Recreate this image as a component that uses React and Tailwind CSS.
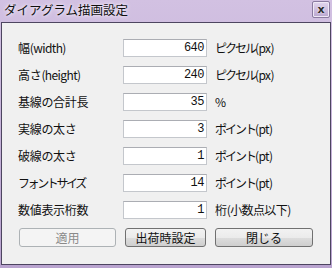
const rows = [
  { label: ['幅', '(width)'], value: '640', unit: ['ピクセル', '(px)'] },
  { label: ['高さ', '(height)'], value: '240', unit: ['ピクセル', '(px)'] },
  { label: ['基線の合計長', ''], value: '35', unit: ['', '%'] },
  { label: ['実線の太さ', ''], value: '3', unit: ['ポイント', '(pt)'] },
  { label: ['破線の太さ', ''], value: '1', unit: ['ポイント', '(pt)'] },
  { label: ['フォントサイズ', ''], value: '14', unit: ['ポイント', '(pt)'] },
  { label: ['数値表示桁数', ''], value: '1', unit: ['桁', '(小数点以下)'] },
];

const font = "font-['Noto_Sans_CJK_JP','Noto_Sans',sans-serif]";

const isKana = (s) => /[\u30a0-\u30ff]/.test(s);

function Text({ parts }) {
  const [a, b] = parts;
  return (
    <>
      {a && (
        <span className={isKana(a) ? (a === 'フォントサイズ' ? 'tracking-[-2.4px]' : 'tracking-[-2px]') : 'tracking-[-0.3px]'}>
          {a}
        </span>
      )}
      {b && <span className="tracking-[-0.6px]">{b}</span>}
    </>
  );
}

export default function App() {
  return (
    <div
      className={`w-[332px] h-[268px] flex flex-col overflow-hidden bg-[linear-gradient(to_bottom,#d2c1e2,#b9a3cf)] ${font}`}
    >
      {/* Title bar */}
      <div className="h-[22px] flex items-start justify-between pl-[4px] pr-[2px]">
        <span className="text-[12.5px] leading-[18px] pt-[1px] text-[#101010] [text-shadow:0_0_5px_#f4eefa,0_0_3px_#f4eefa]">
          ダイアグラム描画設定
        </span>
        <div className="mt-[1px] w-[18px] h-[17px] border border-[#8a7ba0] bg-[linear-gradient(to_bottom,#e2d6ee,#b9a6cf)] rounded-[2px] flex items-center justify-center shadow-[inset_0_0_0_1px_#efe8f6]">
          <span className="text-[11px] leading-none font-bold text-[#2a2a2a] [text-shadow:0_0_2px_white] font-['DejaVu_Sans',sans-serif]">
            x
          </span>
        </div>
      </div>

      {/* Client area */}
      <div className="mx-[1px] h-[243px] border border-[#4d4560] bg-[#f0f0f0] flex flex-col pt-[16px] pl-[16px]">
        <div className="flex flex-col gap-[9px]">
          {rows.map((r) => (
            <div key={r.label[0]} className="flex items-center h-[18px]">
              <span className="w-[105px] text-[12px] leading-none text-[#111] whitespace-nowrap">
                <Text parts={r.label} />
              </span>
              <div className="w-[84px] h-[18px] bg-white border border-[#c4c7cc] border-t-[#abadb3] flex items-center justify-end pr-[2px]">
                <span className="text-[12px] leading-none text-[#111] font-['Liberation_Mono',monospace] tracking-[-0.5px]">
                  {r.value}
                </span>
              </div>
              <span className="ml-[8px] text-[12px] leading-none text-[#111] whitespace-nowrap">
                <Text parts={r.unit} />
              </span>
            </div>
          ))}
        </div>

        <div className="flex mt-[9px] ml-[1px] gap-[9px]">
          <div className="w-[97px] h-[19px] rounded-[3px] border border-[#adb2b5] bg-[#f4f4f4] flex items-center justify-center text-[12px] leading-none text-[#8a8a8a]">
            適用
          </div>
          <div className="w-[81px] h-[19px] rounded-[3px] border border-[#707070] bg-[linear-gradient(to_bottom,#f2f2f2_0%,#ebebeb_50%,#dddddd_51%,#cfcfcf_100%)] flex items-center justify-center text-[12px] leading-none text-[#111]">
            出荷時設定
          </div>
          <div className="w-[98px] h-[19px] rounded-[3px] border border-[#707070] bg-[linear-gradient(to_bottom,#f2f2f2_0%,#ebebeb_50%,#dddddd_51%,#cfcfcf_100%)] flex items-center justify-center text-[12px] leading-none text-[#111]">
            閉じる
          </div>
        </div>
      </div>
    </div>
  );
}
